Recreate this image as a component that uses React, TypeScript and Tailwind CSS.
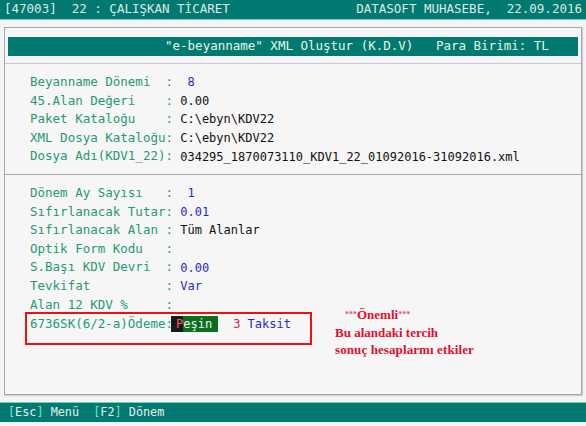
import React from "react";

const mono = { fontFamily: '"DejaVu Sans Mono", "Liberation Mono", monospace' };

function Row({ label, value, valueClass = "text-[#111]" }: { label: string; value?: React.ReactNode; valueClass?: string }) {
  return (
    <div className="h-[18.6px] flex items-center whitespace-pre">
      <span className="text-[#1f9a72]">{label}</span>
      <span className={"text-[12px] " + valueClass}>{value}</span>
    </div>
  );
}

export default function App() {
  return (
    <div className="w-[586px] h-[426px] bg-[#f4f4f4] flex flex-col text-[12.5px] leading-none overflow-hidden" style={mono}>
      <div className="h-[20px] bg-[#007a70] flex items-center justify-between px-[4px] text-[#dfe9e5] whitespace-pre border-b border-[#6fd0b8]">
        <span>[47003]  22 : ÇALIŞKAN TİCARET</span>
        <span>DATASOFT MUHASEBE,  22.09.2016</span>
      </div>
      <div className="mx-[4px] mt-[7px] h-[368px] border border-[#a6a6a6] bg-[#f6f6f6] shadow-[1px_1px_1px_rgba(0,0,0,0.15)] flex flex-col">
        <div className="mt-[9px] mx-[3px] h-[19px] bg-[#007a70] flex items-center pl-[157px] whitespace-pre text-[#eaf5e4]">
          <span>"e-beyanname" XML Oluştur (K.D.V)   Para Birimi: TL</span>
        </div>
        <div className="mt-[7px] border-t border-[#c8c8d8]" />
        <div className="pl-[25px] pt-[9px] pb-[8px]">
          <Row label="Beyanname Dönemi  :" value="  8" valueClass="text-[#2a2ac0]" />
          <Row label="45.Alan Değeri    :" value=" 0.00" />
          <Row label="Paket Kataloğu    :" value=" C:\ebyn\KDV22" />
          <Row label="XML Dosya Kataloğu:" value=" C:\ebyn\KDV22" />
          <Row label="Dosya Adı(KDV1_22):" value=" 034295_1870073110_KDV1_22_01092016-31092016.xml" />
        </div>
        <div className="border-t border-[#a8a8b0]" />
        <div className="pl-[25px] pt-[9px]">
          <Row label="Dönem Ay Sayısı   :" value="  1" valueClass="text-[#2a2ac0]" />
          <Row label="Sıfırlanacak Tutar:" value=" 0.01" valueClass="text-[#2a2ac0]" />
          <Row label="Sıfırlanacak Alan :" value=" Tüm Alanlar" />
          <Row label="Optik Form Kodu   :" />
          <Row label="S.Başı KDV Devri  :" value=" 0.00" valueClass="text-[#2a2ac0]" />
          <Row label="Tevkifat          :" value=" Var" valueClass="text-[#2a2ac0]" />
          <Row label="Alan 12 KDV %     :" />
          <div className="flex items-start -ml-[5px] -mt-[2px]">
            <div className="w-[287px] h-[33px] border-2 border-[#f01010] pl-[3px] pt-[1px]">
              <div className="h-[18.5px] flex items-center whitespace-pre">
                <span className="text-[#1f9a72]">6736SK(6/2-a)Ödeme:</span>
                <span className="-ml-[2px] h-[16px] flex items-center bg-[#0c6e20] text-[#f2f2f2] pr-[6px] text-[12px]">
                  <span className="bg-[#1a1a1a] text-[#ff5a6a] pl-[5px] h-[16px] flex items-center">P</span>eşin
                </span>
                <span className="text-[#d0203a] text-[12px] ml-[15px]">3</span>
                <span className="text-[#2a2ac0] text-[12px]"> Taksit</span>
              </div>
            </div>
            <div
              className="ml-[23px] -mt-[6px] flex flex-col text-[13px] font-bold text-[#e0102c] leading-[17.5px]"
              style={{ fontFamily: '"Liberation Serif", serif' }}
            >
              <span className="pl-[10px]"><span className="text-[8px] align-top text-[#e85070]">***</span>Önemli<span className="text-[8px] align-top text-[#e85070]">***</span></span>
              <span>Bu alandaki tercih</span>
              <span className="tracking-[0.1px]">sonuç hesaplarmı etkiler</span>
            </div>
          </div>
        </div>
      </div>
      <div className="mt-[7px] h-[20px] bg-[#007a70] flex items-center px-[8px] whitespace-pre text-[#e6efe9] text-[11.8px] border-t border-[#6fd0b8]">
        <span className="text-[#7fe0c8]">[</span><span>Esc</span><span className="text-[#7fe0c8]">]</span><span> Menü  </span>
        <span className="text-[#7fe0c8]">[</span><span>F2</span><span className="text-[#7fe0c8]">]</span><span> Dönem</span>
      </div>
    </div>
  );
}
